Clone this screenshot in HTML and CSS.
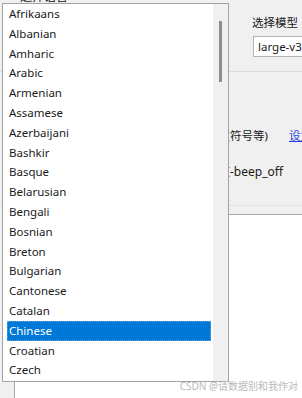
FILE: index.html
```html
<!DOCTYPE html>
<html lang="zh-CN">
<head>
    <meta charset="UTF-8">
    <meta name="viewport" content="width=device-width, initial-scale=1.0">
    <title>语言选择</title>
    <link rel="stylesheet" href="styles.css">
</head>
<body>

<div class="app">
    <!-- top row: language + model -->
    <div class="top">
        <div class="lang-label">选择语言</div>
        <div class="model-group">
            <div class="model-label">选择模型</div>
            <div class="model-box">large-v3</div>
        </div>
    </div>

    <!-- options -->
    <div class="options">
        <div class="opt-row">
            <span class="opt-text opt-punct">去除标点(符号等)</span>
            <a class="opt-link" href="#">设置</a>
        </div>
        <div class="opt-row">
            <span class="opt-text opt-beep">参数-beep_off</span>
        </div>
    </div>

    <!-- output -->
    <div class="output"></div>
</div>

<!-- open combobox list -->
<div class="dropdown">
    <ul class="lang-list">
        <li>Afrikaans</li>
        <li>Albanian</li>
        <li>Amharic</li>
        <li>Arabic</li>
        <li>Armenian</li>
        <li>Assamese</li>
        <li>Azerbaijani</li>
        <li>Bashkir</li>
        <li>Basque</li>
        <li>Belarusian</li>
        <li>Bengali</li>
        <li>Bosnian</li>
        <li>Breton</li>
        <li>Bulgarian</li>
        <li>Cantonese</li>
        <li>Catalan</li>
        <li class="selected">Chinese</li>
        <li>Croatian</li>
        <li>Czech</li>
    </ul>
    <div class="scrollbar"><div class="thumb"></div></div>
</div>

<div class="watermark">CSDN @请数据别和我作对</div>

</body>
</html>
```

FILE: styles.css
```css
body {
    margin: 0;
    width: 302px;
    height: 398px;
    overflow: hidden;
    position: relative;
    background-color: #f0f0f0;
    font-family: "Noto Sans", "Noto Sans CJK SC", sans-serif;
    font-size: 12px;
    color: #1a1a1a;
}
.top {
    height: 72px;
    box-sizing: border-box;
    border-bottom: 1px solid #dcdcdc;
    display: grid;
    grid-template-columns: 252px 1fr;
}
.lang-label {
    margin: -11px 0 0 20px;
    line-height: 16px;
    font-size: 12px;
}
.model-group {
    padding-top: 15px;
}
.model-label {
    line-height: 16px;
    font-size: 11.5px;
}
.model-box {
    margin-top: 5px;
    margin-left: 1px;
    width: 80px;
    height: 21px;
    box-sizing: border-box;
    border: 1px solid #b4b4b4;
    background-color: #fff;
    padding-left: 4px;
    line-height: 19px;
    font-size: 11.5px;
    white-space: nowrap;
}
.options {
    height: 134px;
    box-sizing: border-box;
    border-bottom: 1px solid #e2e2e2;
    padding-top: 53px;
}
.opt-row {
    display: flex;
    align-items: center;
    height: 20px;
    margin-bottom: 16px;
    white-space: nowrap;
}
.opt-text {
    flex-shrink: 0;
    text-align: right;
    font-size: 11.5px;
}
.opt-punct {
    width: 268px;
}
.opt-beep {
    width: 283px;
    font-size: 12px;
}
.opt-link {
    flex-shrink: 0;
    margin-left: 21px;
    color: #1f3fe0;
    font-size: 11.5px;
}
.output {
    margin-top: 8px;
    margin-left: 14px;
    height: 200px;
    border-top: 1px solid #a8a8a8;
    border-left: 1px solid #a8a8a8;
    background-color: #fff;
}
.dropdown {
    position: absolute;
    left: 2px;
    top: 3px;
    width: 227px;
    height: 379px;
    box-sizing: border-box;
    border: 1px solid #a3a3a3;
    background-color: #fff;
    display: flex;
}
.lang-list {
    list-style: none;
    margin: 0;
    padding: 0;
    flex: 1;
}
.lang-list li {
    margin: 0 2px 0 4px;
    padding-left: 2px;
    height: 19.8px;
    line-height: 19.8px;
    font-size: 11.5px;
    box-sizing: border-box;
}
.lang-list li.selected {
    background-color: #0078d7;
    color: #fff;
    outline: 1px dotted #6aa5dc;
    outline-offset: -1px;
}
.scrollbar {
    width: 15px;
    background-color: #f0f0f0;
}
.thumb {
    margin: 17px 0 0 6px;
    width: 3px;
    height: 61px;
    background-color: #8f8f8f;
}
.watermark {
    position: absolute;
    right: 4px;
    top: 379px;
    line-height: 14px;
    font-size: 10px;
    color: #b9b9b9;
    white-space: nowrap;
}
```
